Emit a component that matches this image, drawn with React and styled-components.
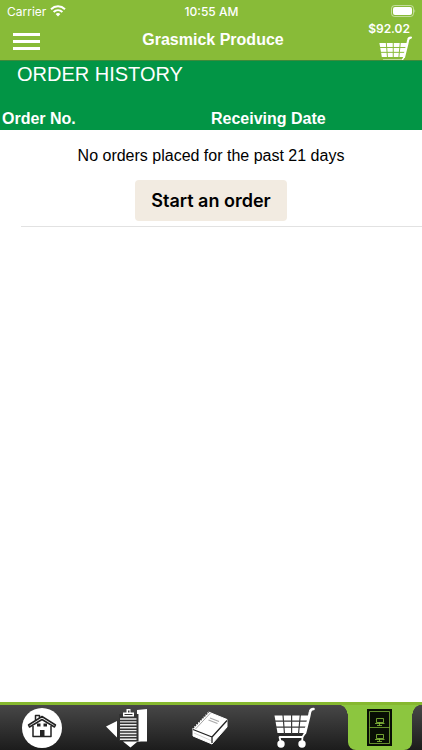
import React from "react"
import styled, { createGlobalStyle } from "styled-components"

const GlobalStyle = createGlobalStyle`
    * {
        box-sizing: border-box;
    }
    body {
        margin: 0;
        background: #fff;
        color: #000;
        font-family: "Liberation Sans", Arial, sans-serif;
    }
    button {
        border: 0;
        padding: 0;
        background: none;
        color: inherit;
        font: inherit;
        cursor: pointer;
    }
    svg {
        display: block;
        flex-shrink: 0;
    }
`

const Page = styled.div`
    display: flex;
    flex-direction: column;
    min-height: 100vh;
`

const Header = styled.header`
    background: #88bb38;
    color: #fff;
    border-bottom: 1px solid #3f8a3a;
`

const StatusBar = styled.div`
    display: grid;
    grid-template-columns: 1fr auto 1fr;
    align-items: center;
    height: 22px;
    padding: 0 6px 0 7px;
    font-family: Inter, sans-serif;
    font-size: 12px;
`

const Carrier = styled.div`
    display: flex;
    align-items: center;
    gap: 4px;
`

const Time = styled.div`
    font-weight: 500;
`

const Battery = styled.div`
    display: flex;
    justify-content: flex-end;
`

const TitleBar = styled.div`
    display: grid;
    grid-template-columns: 1fr auto 1fr;
    grid-template-rows: 38px;
    padding: 0 9px 0 13px;
`

const MenuButton = styled.button`
    display: flex;
    flex-direction: column;
    align-self: center;
    gap: 4px;
    width: 27px;
`

const MenuLine = styled.span`
    height: 3px;
    background: #fff;
`

const Title = styled.h1`
    margin: 0;
    font-size: 16px;
    line-height: 36px;
`

const CartButton = styled.button`
    display: flex;
    flex-direction: column;
    align-items: flex-end;
    justify-self: end;
    overflow: hidden;
    font-family: Inter, sans-serif;
    font-size: 12px;
    line-height: 14px;
    font-weight: 600;
`

const Total = styled.span`
    padding-right: 3px;
`

const Main = styled.main`
    flex: 1;
`

const Heading = styled.h2`
    margin: 0;
    padding: 0 17px;
    height: 47px;
    background: #029545;
    color: #fff;
    font-size: 20px;
    font-weight: 400;
    line-height: 26px;
`

const Orders = styled.table`
    width: 100%;
    table-layout: fixed;
    border-collapse: collapse;
`

const Column = styled.th`
    padding: 0 2px;
    height: 22px;
    background: #029545;
    color: #fff;
    font-size: 16px;
    line-height: 22px;
    text-align: left;
    &:last-child {
        padding: 0;
    }
`

const EmptyCell = styled.td`
    padding: 0;
`

const Empty = styled.div`
    display: flex;
    flex-direction: column;
    align-items: center;
    gap: 14px;
    padding: 16px 0 5px;
    font-size: 16px;
    line-height: 20px;
`

const StartButton = styled.button`
    height: 41px;
    padding: 0 16px;
    border-radius: 4px;
    background: #f2ebe1;
    font-family: Inter, sans-serif;
    font-size: 18px;
    font-weight: 600;
`

const Divider = styled.hr`
    margin: 0 0 0 21px;
    border: 0;
    border-top: 1px solid #e2e2e2;
`

const Tabs = styled.nav`
    display: flex;
    height: 48px;
    border-top: 3px solid #86b82f;
    background: linear-gradient(#474747, #1c1c1c);
`

const Tab = styled.button`
    display: flex;
    flex: 1;
    align-items: center;
    justify-content: center;
    min-width: 0;
`

const ActiveTab = styled.span`
    position: relative;
    display: flex;
    align-items: center;
    justify-content: center;
    width: 64px;
    height: 100%;
    border-radius: 0 0 8px 8px;
    background: #8cc63f;
    &::before,
    &::after {
        content: "";
        position: absolute;
        top: 0;
        width: 8px;
        height: 12px;
    }
    &::before {
        right: 100%;
        background: radial-gradient(ellipse 8px 12px at bottom left, transparent 96%, #8cc63f 100%);
    }
    &::after {
        left: 100%;
        background: radial-gradient(ellipse 8px 12px at bottom right, transparent 96%, #8cc63f 100%);
    }
`

const WifiIcon = () => (
    <svg width="16" height="12" viewBox="0 0 16 12" fill="none" stroke="#fff" strokeWidth="2">
        <path d="M1 4.2C5 .4 11 .4 15 4.2" />
        <path d="M3.6 7C6.2 4.6 9.8 4.6 12.4 7" />
        <path d="M5.6 8.9Q8 6.9 10.4 8.9L8 11.5Z" fill="#fff" stroke="none" />
    </svg>
)

const BatteryIcon = () => (
    <svg width="25" height="12" viewBox="0 0 25 12">
        <rect x=".5" y=".5" width="22" height="11" rx="3" fill="none" stroke="#fff" strokeOpacity=".5" />
        <rect x="2" y="2" width="19" height="8" rx="2" fill="#fff" />
        <path d="M23.5 4Q25 6 23.5 8Z" fill="#fff" fillOpacity=".6" />
    </svg>
)

const CartIcon = ({ size, grid }) => (
    <svg width={size} height={size} viewBox="0 0 42 42">
        <path d="M.5 8.500H35L31 26H3.500Z" fill="#fff" />
        <path d="M9 8L10.500 27M17.600 8V27M26.300 8L24.500 27M0 14.200H35M1 20.200H34" fill="none" stroke={grid} strokeWidth="1.200" />
        <g fill="none" stroke="#fff" strokeLinecap="round" strokeLinejoin="round">
            <path d="M39.500 2Q36.500 2 36 5L35 10L31 26" strokeWidth="2.600" />
            <path d="M7 36L5.500 30H28.500L28 36M28.500 30L31 26" strokeWidth="1.800" />
        </g>
        <circle cx="7" cy="37" r="3.700" fill="#fff" />
        <circle cx="28" cy="37" r="3.700" fill="#fff" />
    </svg>
)

const HomeIcon = () => (
    <svg width="40" height="40" viewBox="0 0 40 40">
        <circle cx="20" cy="20" r="20" fill="#fff" />
        <g fill="none" stroke="#222" strokeWidth="1.500" strokeLinejoin="round">
            <path d="M11 18V28.500H29V18" />
            <path d="M13.500 12V7.500H17.500V10" />
            <path d="M6.500 17L20 8.500L33.500 17L32.500 19L20 11.500L7.500 19Z" fill="#fff" />
        </g>
        <path d="M18 22H22.500V29H18ZM15 15.500H18.500V18.500H15ZM21.500 15.500H25V18.500H21.500Z" fill="#222" />
    </svg>
)

const ListIcon = () => (
    <svg width="42" height="40" viewBox="0 0 42 40">
        <path d="M0 18.500L11 13V29.500Z" fill="#fff" />
        <path d="M31 2L41 1V33.500H35L31 34L24.500 39.500L17 33.500H32.500V6H31Z" fill="#fff" />
        <path d="M13 6H32V33H13Z" fill="#333" />
        <path d="M14 11H30.500M14 13.900H30.500M14 16.800H30.500M14 19.700H30.500M14 22.600H30.500M14 25.500H30.500M14 28.400H30.500M14 31.300H30.500" stroke="#e8e8e8" strokeWidth="1.400" />
        <path d="M17 8.500V4.500H20.500V1H24.500V4.500H28V8.500Z" fill="#fff" />
        <path d="M22 2.500H23.500V4.500H22ZM18.500 6H26.500V7H18.500Z" fill="#333" />
    </svg>
)

const BookIcon = () => (
    <svg width="38" height="34" viewBox="0 0 38 34" strokeLinejoin="round">
        <path d="M1 17.500L1 25L20 33L35 16V8.500L16.500 1Z" fill="#fff" stroke="#fff" />
        <path d="M1 18.500L20 26L35 9.500M20 26V32" fill="none" stroke="#222" strokeWidth="1.300" />
        <path d="M1 17L16.500 1" stroke="#333" strokeWidth="1.500" strokeDasharray="1.500 1.200" />
        <path d="M3.500 18L18.500 2" stroke="#666" strokeWidth=".6" />
        <path d="M18 7L27 10.500M16.500 9L25.500 12.500" stroke="#aaa" strokeWidth="1.300" />
        <path d="M2 22L19 29.500" stroke="#bbb" strokeWidth=".6" />
    </svg>
)

const CabinetIcon = () => (
    <svg width="25" height="37" viewBox="0 0 25 37">
        <path d="M0 0H25V37H0Z" fill="#080e04" />
        <g fill="none" stroke="#8cc63f">
            <path d="M2.500 2.500H22.500V34.500H2.500ZM2.500 18.500H22.500" strokeOpacity=".7" />
            <path d="M9.500 9.500H16.500V13.500H9.500ZM8 14.500H17.500M12.500 13.500V16.500M10 16.500H15M9.500 25.500H16.500V29.500H9.500ZM8 30.500H17.500M12.500 29.500V32.500M10 32.500H15" strokeOpacity=".8" />
        </g>
    </svg>
)

const App = () => {
    return (
        <Page>
            <GlobalStyle />
            <Header>
                <StatusBar>
                    <Carrier>Carrier <WifiIcon /></Carrier>
                    <Time>10:55 AM</Time>
                    <Battery><BatteryIcon /></Battery>
                </StatusBar>
                <TitleBar>
                    <MenuButton aria-label="Menu">
                        <MenuLine />
                        <MenuLine />
                        <MenuLine />
                    </MenuButton>
                    <Title>Grasmick Produce</Title>
                    <CartButton>
                        <Total>$92.02</Total>
                        <CartIcon size={34} grid="#88bb38" />
                    </CartButton>
                </TitleBar>
            </Header>
            <Main>
                <Heading>ORDER HISTORY</Heading>
                <Orders>
                    <thead>
                        <tr>
                            <Column scope="col">Order No.</Column>
                            <Column scope="col">Receiving Date</Column>
                        </tr>
                    </thead>
                    <tbody>
                        <tr>
                            <EmptyCell colSpan={2}>
                                <Empty>
                                    <span>No orders placed for the past 21 days</span>
                                    <StartButton>Start an order</StartButton>
                                </Empty>
                            </EmptyCell>
                        </tr>
                    </tbody>
                </Orders>
                <Divider />
            </Main>
            <Tabs>
                <Tab aria-label="Home"><HomeIcon /></Tab>
                <Tab aria-label="Order lists"><ListIcon /></Tab>
                <Tab aria-label="Catalog"><BookIcon /></Tab>
                <Tab aria-label="Cart"><CartIcon size={42} grid="#3a3a3a" /></Tab>
                <Tab aria-label="Order history" aria-current="page">
                    <ActiveTab><CabinetIcon /></ActiveTab>
                </Tab>
            </Tabs>
        </Page>
    )
}

export default App
